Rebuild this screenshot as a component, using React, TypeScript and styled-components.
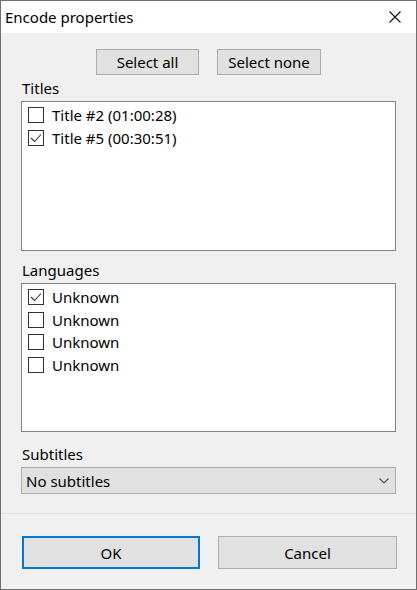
import styled, { createGlobalStyle } from "styled-components";

const GlobalStyle = createGlobalStyle`
  * {
    box-sizing: border-box;
  }

  body {
    margin: 0;
    background: #ffffff;
    font-family: "Noto Sans", "Open Sans", sans-serif;
    color: #000000;
  }
`;

const Window = styled.div`
  width: 417px;
  height: 590px;
  display: flex;
  flex-direction: column;
  border: 1px solid #6f6f6f;
  background: #f0f0f0;
`;

const TitleBar = styled.div`
  height: 32px;
  display: flex;
  align-items: center;
  justify-content: space-between;
  padding: 0 14px 0 4px;
  background: #ffffff;
  font-size: 15px;
`;

const CloseButton = styled.div`
  width: 12px;
  height: 12px;
  display: flex;
  margin-right: 1px;
`;

const Body = styled.div`
  flex: 1;
  display: flex;
  flex-direction: column;
  padding: 16px 20px 0 20px;
`;

const ButtonRow = styled.div`
  display: flex;
  justify-content: center;
  gap: 18px;
`;

const Button = styled.button<{ $width: number; $height: number; $primary?: boolean }>`
  width: ${p => p.$width}px;
  height: ${p => p.$height}px;
  padding: 0;
  background: #e1e1e1;
  border: ${p => (p.$primary ? "2px solid #0078d7" : "1px solid #adadad")};
  font-family: inherit;
  font-size: 15px;
  color: #000000;
`;

const Label = styled.div<{ $top: number }>`
  margin-top: ${p => p.$top}px;
  margin-bottom: 3px;
  padding-left: 1px;
  font-size: 15px;
  line-height: 20px;
`;

const ListBox = styled.div<{ $height: number }>`
  height: ${p => p.$height}px;
  background: #ffffff;
  border: 1px solid #828282;
  padding: 2px 6px;
`;

const Row = styled.div`
  display: flex;
  align-items: center;
  gap: 8px;
  height: 22.5px;
  font-size: 15px;
`;

const Box = styled.span`
  width: 16px;
  height: 16px;
  flex: none;
  display: flex;
  align-items: center;
  justify-content: center;
  border: 1px solid #333333;
  background: #ffffff;
`;

const Select = styled.div`
  height: 27px;
  display: flex;
  align-items: center;
  justify-content: space-between;
  padding: 0 6px 0 4px;
  background: #e1e1e1;
  border: 1px solid #adadad;
  font-size: 15px;
`;

const Footer = styled.div`
  height: 76px;
  display: flex;
  gap: 18px;
  padding: 22px 19px 0 21px;
  border-top: 1px solid #e3e3e3;
`;

function CheckBox({ checked }: { checked: boolean }) {
  return (
    <Box>
      {checked && (
        <svg width="12" height="10" viewBox="0 0 12 10">
          <path d="M1 5 L4.5 8.5 L11 1.5" fill="none" stroke="#333333" strokeWidth="1.1" />
        </svg>
      )}
    </Box>
  );
}

const titles = [
  { name: "Title #2 (01:00:28)", checked: false },
  { name: "Title #5 (00:30:51)", checked: true },
];

const languages = [true, false, false, false];

export default function App() {
  return (
    <>
      <GlobalStyle />
      <Window>
        <TitleBar>
          <span>Encode properties</span>
          <CloseButton>
            <svg width="12" height="12" viewBox="0 0 12 12">
              <path d="M0.5 0.5 L11.5 11.5 M11.5 0.5 L0.5 11.5" stroke="#111111" strokeWidth="1.1" />
            </svg>
          </CloseButton>
        </TitleBar>
        <Body>
          <ButtonRow>
            <Button $width={103} $height={26}>Select all</Button>
            <Button $width={104} $height={26}>Select none</Button>
          </ButtonRow>

          <Label $top={3}>Titles</Label>
          <ListBox $height={150}>
            {titles.map(t => (
              <Row key={t.name}>
                <CheckBox checked={t.checked} />
                {t.name}
              </Row>
            ))}
          </ListBox>

          <Label $top={9}>Languages</Label>
          <ListBox $height={149}>
            {languages.map((checked, i) => (
              <Row key={i}>
                <CheckBox checked={checked} />
                Unknown
              </Row>
            ))}
          </ListBox>

          <Label $top={12}>Subtitles</Label>
          <Select>
            <span>No subtitles</span>
            <svg width="10" height="6" viewBox="0 0 10 6">
              <path d="M0.5 0.5 L5 5 L9.5 0.5" fill="none" stroke="#555555" strokeWidth="1.2" />
            </svg>
          </Select>
        </Body>
        <Footer>
          <Button $width={178} $height={33} $primary>OK</Button>
          <Button $width={179} $height={33}>Cancel</Button>
        </Footer>
      </Window>
    </>
  );
}
